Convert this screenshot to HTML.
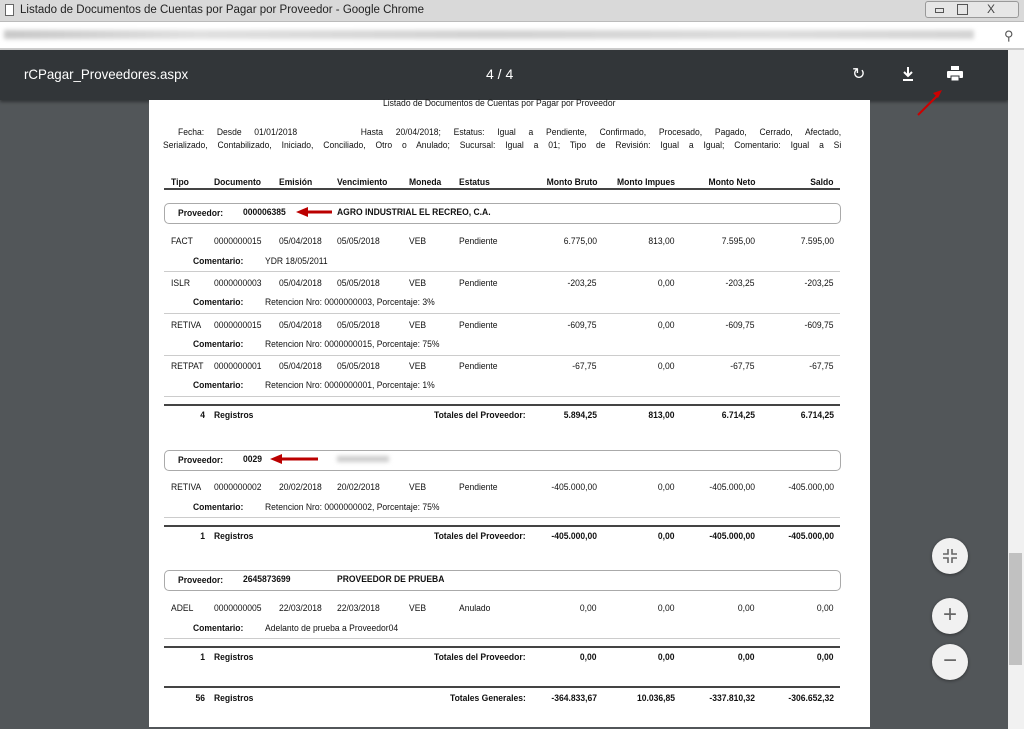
<!DOCTYPE html>
<html><head><meta charset="utf-8"><style>
*{margin:0;padding:0;box-sizing:border-box}
body{width:1024px;height:729px;overflow:hidden;position:relative;background:#525659;font-family:"Liberation Sans",Arial,sans-serif}
.a{position:absolute;white-space:nowrap}
.t{position:absolute;white-space:nowrap;font-size:9px;line-height:10px;color:#111;transform:scaleX(.95);transform-origin:left}
.r{transform-origin:right}
.b{font-weight:bold}
.hl{position:absolute;left:164px;width:676px;height:1px;background:#ccc}
.th{position:absolute;left:164px;width:676px;height:2px;background:#444}
.box{position:absolute;left:164px;width:677px;height:21px;border:1px solid #aaa;border-radius:5px}
.fab{position:absolute;left:932px;width:36px;height:36px;border-radius:50%;background:#f1f1f1;box-shadow:0 1px 3px rgba(0,0,0,.4);color:#666;text-align:center;font-size:24px;line-height:34px}
</style></head><body>
<div class="a" style="left:0;top:0;width:1024px;height:22px;background:#d9d9d9;border-bottom:1px solid #bbb"></div>
<div class="a" style="left:5px;top:4px;width:9px;height:12px;border:1px solid #666;background:#fff"></div>
<div class="a" style="left:20px;top:4px;font-size:11.5px;color:#222">Listado de Documentos de Cuentas por Pagar por Proveedor - Google Chrome</div>
<div class="a" style="left:925px;top:1px;width:94px;height:17px;border:1px solid #999;border-radius:3px;background:#e6e6e6"></div>
<div class="a" style="left:935px;top:8px;width:9px;height:5px;border:1px solid #555"></div>
<div class="a" style="left:957px;top:4px;width:11px;height:11px;border:1px solid #555"></div>
<div class="a" style="left:987px;top:2px;font-size:12px;color:#444">X</div>
<div class="a" style="left:0;top:22px;width:1024px;height:28px;background:#fff;border-bottom:2px solid #ccc"></div>
<div class="a" style="left:4px;top:30px;width:970px;height:9px;background:linear-gradient(90deg,#c8c8c8,#e0e0e0 20%,#d2d2d2 50%,#dcdcdc 80%,#d4d4d4);filter:blur(2px)"></div>
<div class="a" style="left:1004px;top:28px;font-size:13px;color:#555">⚲</div>
<div class="a" style="left:0;top:50px;width:1008px;height:50px;background:#323639;box-shadow:0 2px 3px rgba(0,0,0,.4)"></div>
<div class="a" style="left:24px;top:66px;font-size:14px;color:#fff;transform:scaleX(.95);transform-origin:left">rCPagar_Proveedores.aspx</div>
<div class="a" style="left:486px;top:66px;font-size:14px;color:#fff">4 / 4</div>
<div class="a" style="left:852px;top:64px;font-size:16px;color:#fff">↻</div>
<svg class="a" style="left:900px;top:66px" width="16" height="16"><path d="M8 1v9M4 6l4 4 4-4M3 14h10" stroke="#fff" stroke-width="2" fill="none"/></svg>
<svg class="a" style="left:946px;top:66px" width="18" height="16"><rect x="5" y="0" width="8" height="4" fill="#fff"/><rect x="1" y="5" width="16" height="7" rx="1" fill="#fff"/><rect x="5" y="10" width="8" height="5" fill="#fff" stroke="#323639"/></svg>
<svg class="a" style="left:915px;top:86px" width="30" height="32"><path d="M3 29L24 8" stroke="#c00" stroke-width="2"/><path d="M27 4l-9 3 5 5z" fill="#c00"/></svg>
<div class="a" style="left:1008px;top:50px;width:16px;height:679px;background:#f1f1f1"></div>
<div class="a" style="left:1009px;top:553px;width:13px;height:112px;background:#c1c1c1"></div>
<div class="a" style="left:149px;top:100px;width:721px;height:627px;background:#fff"></div>
<div class="t" style="left:383px;top:98px">Listado de Documentos de Cuentas por Pagar por Proveedor</div>
<div class="t" style="left:178px;top:127px;width:698px;text-align:justify;text-align-last:justify">Fecha: Desde 01/01/2018 &nbsp; &nbsp; Hasta 20/04/2018; Estatus: Igual a Pendiente, Confirmado, Procesado, Pagado, Cerrado, Afectado,</div>
<div class="t" style="left:163px;top:140px;width:714px;text-align:justify;text-align-last:justify">Serializado, Contabilizado, Iniciado, Conciliado, Otro o Anulado; Sucursal: Igual a 01; Tipo de Revisión: Igual a Igual; Comentario: Igual a Si</div>
<div class="t b" style="left:171px;top:177px">Tipo</div>
<div class="t b" style="left:214px;top:177px">Documento</div>
<div class="t b" style="left:279px;top:177px">Emisión</div>
<div class="t b" style="left:337px;top:177px">Vencimiento</div>
<div class="t b" style="left:409px;top:177px">Moneda</div>
<div class="t b" style="left:459px;top:177px">Estatus</div>
<div class="t b r" style="right:427px;top:177px">Monto Bruto</div>
<div class="t b r" style="right:349px;top:177px">Monto Impues</div>
<div class="t b r" style="right:269px;top:177px">Monto Neto</div>
<div class="t b r" style="right:190px;top:177px">Saldo</div>
<div class="th" style="top:188px"></div>

<div class="box" style="top:203px"></div>
<div class="t b" style="left:178px;top:208px">Proveedor:</div>
<div class="t b" style="left:243px;top:207px">000006385</div>
<div class="t b" style="left:337px;top:207px">AGRO INDUSTRIAL EL RECREO, C.A.</div>
<svg class="a" style="left:294px;top:206px" width="40" height="12"><path d="M12 6H38" stroke="#b00" stroke-width="3"/><path d="M2 6l12-5v10z" fill="#b00"/></svg>

<div class="t" style="left:171px;top:236px">FACT</div><div class="t" style="left:214px;top:236px">0000000015</div><div class="t" style="left:279px;top:236px">05/04/2018</div><div class="t" style="left:337px;top:236px">05/05/2018</div><div class="t" style="left:409px;top:236px">VEB</div><div class="t" style="left:459px;top:236px">Pendiente</div>
<div class="t r" style="right:427px;top:236px">6.775,00</div><div class="t r" style="right:349px;top:236px">813,00</div><div class="t r" style="right:269px;top:236px">7.595,00</div><div class="t r" style="right:190px;top:236px">7.595,00</div>
<div class="t b" style="left:193px;top:256px">Comentario:</div><div class="t" style="left:265px;top:256px">YDR 18/05/2011</div>
<div class="hl" style="top:271px"></div>

<div class="t" style="left:171px;top:278px">ISLR</div><div class="t" style="left:214px;top:278px">0000000003</div><div class="t" style="left:279px;top:278px">05/04/2018</div><div class="t" style="left:337px;top:278px">05/05/2018</div><div class="t" style="left:409px;top:278px">VEB</div><div class="t" style="left:459px;top:278px">Pendiente</div>
<div class="t r" style="right:427px;top:278px">-203,25</div><div class="t r" style="right:349px;top:278px">0,00</div><div class="t r" style="right:269px;top:278px">-203,25</div><div class="t r" style="right:190px;top:278px">-203,25</div>
<div class="t b" style="left:193px;top:297px">Comentario:</div><div class="t" style="left:265px;top:297px">Retencion Nro: 0000000003, Porcentaje: 3%</div>
<div class="hl" style="top:313px"></div>

<div class="t" style="left:171px;top:320px">RETIVA</div><div class="t" style="left:214px;top:320px">0000000015</div><div class="t" style="left:279px;top:320px">05/04/2018</div><div class="t" style="left:337px;top:320px">05/05/2018</div><div class="t" style="left:409px;top:320px">VEB</div><div class="t" style="left:459px;top:320px">Pendiente</div>
<div class="t r" style="right:427px;top:320px">-609,75</div><div class="t r" style="right:349px;top:320px">0,00</div><div class="t r" style="right:269px;top:320px">-609,75</div><div class="t r" style="right:190px;top:320px">-609,75</div>
<div class="t b" style="left:193px;top:339px">Comentario:</div><div class="t" style="left:265px;top:339px">Retencion Nro: 0000000015, Porcentaje: 75%</div>
<div class="hl" style="top:355px"></div>

<div class="t" style="left:171px;top:361px">RETPAT</div><div class="t" style="left:214px;top:361px">0000000001</div><div class="t" style="left:279px;top:361px">05/04/2018</div><div class="t" style="left:337px;top:361px">05/05/2018</div><div class="t" style="left:409px;top:361px">VEB</div><div class="t" style="left:459px;top:361px">Pendiente</div>
<div class="t r" style="right:427px;top:361px">-67,75</div><div class="t r" style="right:349px;top:361px">0,00</div><div class="t r" style="right:269px;top:361px">-67,75</div><div class="t r" style="right:190px;top:361px">-67,75</div>
<div class="t b" style="left:193px;top:380px">Comentario:</div><div class="t" style="left:265px;top:380px">Retencion Nro: 0000000001, Porcentaje: 1%</div>
<div class="hl" style="top:396px"></div>
<div class="th" style="top:404px"></div>
<div class="t b r" style="right:819px;top:410px">4</div><div class="t b" style="left:214px;top:410px">Registros</div><div class="t b" style="left:434px;top:410px">Totales del Proveedor:</div>
<div class="t b r" style="right:427px;top:410px">5.894,25</div><div class="t b r" style="right:349px;top:410px">813,00</div><div class="t b r" style="right:269px;top:410px">6.714,25</div><div class="t b r" style="right:190px;top:410px">6.714,25</div>

<div class="box" style="top:450px"></div>
<div class="t b" style="left:178px;top:455px">Proveedor:</div>
<div class="t b" style="left:243px;top:454px">0029</div>
<svg class="a" style="left:268px;top:453px" width="52" height="12"><path d="M12 6H50" stroke="#b00" stroke-width="3"/><path d="M2 6l12-5v10z" fill="#b00"/></svg>
<div class="a" style="left:337px;top:456px;width:52px;height:6px;background:#ccc;filter:blur(2px)"></div>
<div class="t" style="left:171px;top:482px">RETIVA</div><div class="t" style="left:214px;top:482px">0000000002</div><div class="t" style="left:279px;top:482px">20/02/2018</div><div class="t" style="left:337px;top:482px">20/02/2018</div><div class="t" style="left:409px;top:482px">VEB</div><div class="t" style="left:459px;top:482px">Pendiente</div>
<div class="t r" style="right:427px;top:482px">-405.000,00</div><div class="t r" style="right:349px;top:482px">0,00</div><div class="t r" style="right:269px;top:482px">-405.000,00</div><div class="t r" style="right:190px;top:482px">-405.000,00</div>
<div class="t b" style="left:193px;top:502px">Comentario:</div><div class="t" style="left:265px;top:502px">Retencion Nro: 0000000002, Porcentaje: 75%</div>
<div class="hl" style="top:517px"></div>
<div class="th" style="top:525px"></div>
<div class="t b r" style="right:819px;top:531px">1</div><div class="t b" style="left:214px;top:531px">Registros</div><div class="t b" style="left:434px;top:531px">Totales del Proveedor:</div>
<div class="t b r" style="right:427px;top:531px">-405.000,00</div><div class="t b r" style="right:349px;top:531px">0,00</div><div class="t b r" style="right:269px;top:531px">-405.000,00</div><div class="t b r" style="right:190px;top:531px">-405.000,00</div>

<div class="box" style="top:570px"></div>
<div class="t b" style="left:178px;top:575px">Proveedor:</div>
<div class="t b" style="left:243px;top:574px">2645873699</div>
<div class="t b" style="left:337px;top:574px">PROVEEDOR DE PRUEBA</div>
<div class="t" style="left:171px;top:603px">ADEL</div><div class="t" style="left:214px;top:603px">0000000005</div><div class="t" style="left:279px;top:603px">22/03/2018</div><div class="t" style="left:337px;top:603px">22/03/2018</div><div class="t" style="left:409px;top:603px">VEB</div><div class="t" style="left:459px;top:603px">Anulado</div>
<div class="t r" style="right:427px;top:603px">0,00</div><div class="t r" style="right:349px;top:603px">0,00</div><div class="t r" style="right:269px;top:603px">0,00</div><div class="t r" style="right:190px;top:603px">0,00</div>
<div class="t b" style="left:193px;top:623px">Comentario:</div><div class="t" style="left:265px;top:623px">Adelanto de prueba a Proveedor04</div>
<div class="hl" style="top:638px"></div>
<div class="th" style="top:646px"></div>
<div class="t b r" style="right:819px;top:652px">1</div><div class="t b" style="left:214px;top:652px">Registros</div><div class="t b" style="left:434px;top:652px">Totales del Proveedor:</div>
<div class="t b r" style="right:427px;top:652px">0,00</div><div class="t b r" style="right:349px;top:652px">0,00</div><div class="t b r" style="right:269px;top:652px">0,00</div><div class="t b r" style="right:190px;top:652px">0,00</div>
<div class="th" style="top:686px"></div>
<div class="t b r" style="right:819px;top:693px">56</div><div class="t b" style="left:214px;top:693px">Registros</div><div class="t b" style="left:450px;top:693px">Totales Generales:</div>
<div class="t b r" style="right:427px;top:693px">-364.833,67</div><div class="t b r" style="right:349px;top:693px">10.036,85</div><div class="t b r" style="right:269px;top:693px">-337.810,32</div><div class="t b r" style="right:190px;top:693px">-306.652,32</div>

<div class="fab" style="top:538px"><svg width="14" height="14" style="margin-top:11px"><path d="M5 0v5H0M9 0v5h5M5 14V9H0M9 14V9h5" stroke="#666" stroke-width="1.6" fill="none"/></svg></div>
<div class="fab" style="top:598px">+</div>
<div class="fab" style="top:644px">−</div>
</body></html>
